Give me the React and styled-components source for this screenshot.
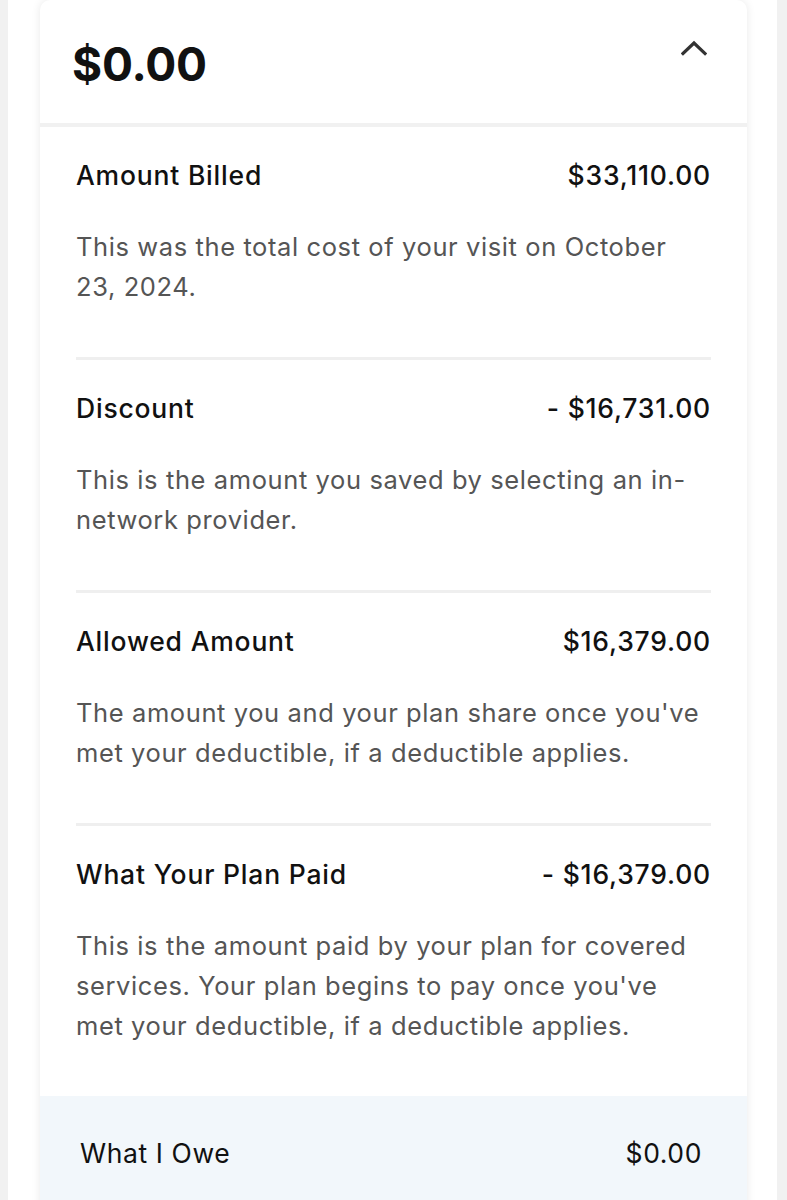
import React from "react";
import styled, { createGlobalStyle } from "styled-components";

const Global = createGlobalStyle`
  html, body { margin: 0; padding: 0; }
  body {
    background: #f1f1f1;
    font-family: "Inter", "Noto Sans", sans-serif;
    -webkit-font-smoothing: antialiased;
  }
`;

const Page = styled.div`
  margin: 0 10px 0 8px;
  min-height: 1200px;
  background: #ffffff;
  padding: 0 30px 0 32px;
  overflow: hidden;
`;

const Card = styled.div`
  background: #ffffff;
  border-radius: 10px 10px 0 0;
  box-shadow: 0 0 10px rgba(0, 0, 0, 0.09);
  min-height: 1220px;
  display: flex;
  flex-direction: column;
`;

const Header = styled.div`
  height: 123px;
  display: flex;
  align-items: center;
  justify-content: space-between;
  padding: 0 40px 0 32px;
  border-bottom: 4px solid #f1f1f1;
`;

const Total = styled.div`
  font-size: 46px;
  font-weight: 700;
  color: #111111;
  letter-spacing: -0.2px;
  margin-top: 4px;
`;

const Chevron = styled.svg`
  align-self: flex-start;
  margin-top: 40px;
  width: 26px;
  height: 16px;
`;

const Body = styled.div`
  padding: 0 36px;
`;

const Section = styled.div`
  padding: 28px 0 50px;
  border-bottom: ${(p) => (p.$last ? "none" : "3px solid #efefef")};
`;

const Row = styled.div`
  display: flex;
  justify-content: space-between;
  align-items: center;
  height: 40px;
  font-size: 26.5px;
  font-weight: 450;
  letter-spacing: 0.8px;
  color: #111111;
`;

const Desc = styled.p`
  margin: 32px 0 0;
  font-size: 25.5px;
  line-height: 40px;
  letter-spacing: 0.6px;
  color: #555555;
  font-weight: 400;
`;

const Owe = styled.div`
  background: #f2f7fb;
  flex: 1;
  padding: 37px 45px 0 40px;
`;

const OweRow = styled(Row)`
  font-weight: 400;
  letter-spacing: 0.6px;
`;

const items = [
  {
    title: "Amount Billed",
    amount: "$33,110.00",
    desc: "This was the total cost of your visit on October 23, 2024.",
  },
  {
    title: "Discount",
    amount: "- $16,731.00",
    desc: "This is the amount you saved by selecting an in-network provider.",
  },
  {
    title: "Allowed Amount",
    amount: "$16,379.00",
    desc: "The amount you and your plan share once you've met your deductible, if a deductible applies.",
  },
  {
    title: "What Your Plan Paid",
    amount: "- $16,379.00",
    desc: "This is the amount paid by your plan for covered services. Your plan begins to pay once you've met your deductible, if a deductible applies.",
  },
];

export default function App() {
  return (
    <>
      <Global />
      <Page>
        <Card>
          <Header>
            <Total>$0.00</Total>
            <Chevron viewBox="0 0 26 16" fill="none">
              <path
                d="M2 13.5 L13 3 L24 13.5"
                stroke="#333333"
                strokeWidth="3.2"
                strokeLinecap="square"
                strokeLinejoin="miter"
              />
            </Chevron>
          </Header>
          <Body>
            {items.map((it, i) => (
              <Section key={it.title} $last={i === items.length - 1}>
                <Row>
                  <span>{it.title}</span>
                  <span>{it.amount}</span>
                </Row>
                <Desc>{it.desc}</Desc>
              </Section>
            ))}
          </Body>
          <Owe>
            <OweRow>
              <span>What I Owe</span>
              <span>$0.00</span>
            </OweRow>
          </Owe>
        </Card>
      </Page>
    </>
  );
}
